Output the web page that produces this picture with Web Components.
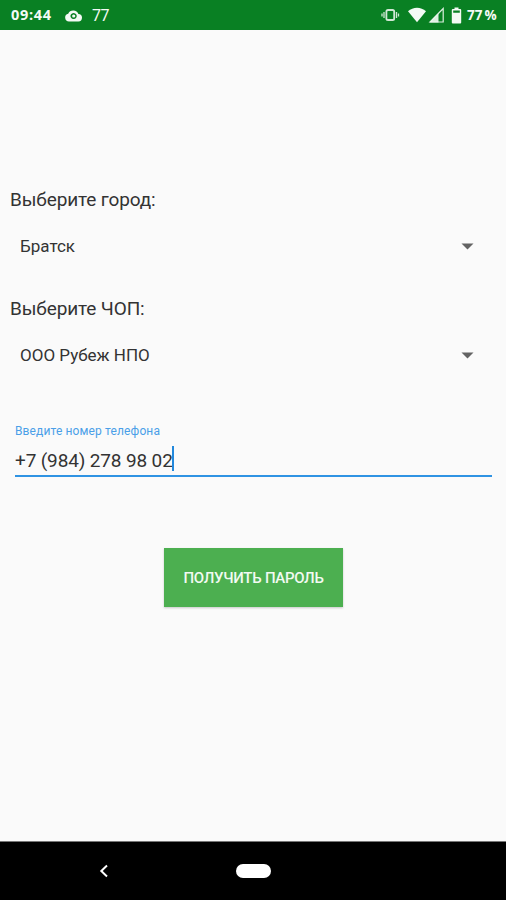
<!DOCTYPE html>
<html lang="ru">
<head>
<meta charset="utf-8">
<title>Получить пароль</title>
<style>
body { margin: 0; }
</style>
</head>
<body>
<app-screen>
  <status-bar slot="top" time="09:44" temp="77" battery="77 %"></status-bar>
  <spinner-field label="Выберите город:">Братск</spinner-field>
  <spinner-field label="Выберите ЧОП:">ООО Рубеж НПО</spinner-field>
  <phone-input label="Введите номер телефона">+7 (984) 278 98 02</phone-input>
  <action-button>ПОЛУЧИТЬ ПАРОЛЬ</action-button>
  <nav-bar slot="bottom"></nav-bar>
</app-screen>
<script>
class Base extends HTMLElement {
  connectedCallback() {
    if (this.shadowRoot) return;
    this.attachShadow({ mode: 'open' }).innerHTML = this.view();
  }
  attr(n) { return this.getAttribute(n) || ''; }
}

customElements.define('app-screen', class extends Base {
  view() { return `<style>
    :host { display: flex; flex-direction: column; width: 506px; height: 900px; background: #fafafa;
      font-family: Roboto, "Liberation Sans", sans-serif; color: #333; overflow: hidden; }
    main { flex: 1; display: flex; flex-direction: column; padding-top: 155px; }
  </style><slot name="top"></slot><main><slot></slot></main><slot name="bottom"></slot>`; }
});

customElements.define('status-bar', class extends Base {
  view() { return `<style>
    :host { display: flex; align-items: center; height: 30px; padding: 0 9px 0 11px; box-sizing: border-box;
      background: #098023; color: #f4faf5; font: 700 14px/30px "Open Sans", sans-serif; flex: none; }
    span { white-space: nowrap; }
    .time { width: 54px; font-size: 14.500px; letter-spacing: .7px; }
    .temp { font: 400 16px/30px Roboto, sans-serif; margin-left: 10px; flex: 1; letter-spacing: -.4px; padding-top: 1px; }
    .pct { width: 30px; word-spacing: -1.500px; font-size: 13.500px; letter-spacing: 0; }
    svg { display: block; fill: currentColor; flex: none; }
    .signals { margin-right: 7px; }
    .bat { margin-right: 5px; }
  </style>
  <span class="time">${this.attr('time')}</span>
  <svg width="17" height="14" viewBox="0 0 17 14"><path fill-rule="evenodd" d="M4 13.400A3.900 3.900 0 0 1 3.200 5.700 5.500 5.500 0 0 1 13.400 6 3.700 3.700 0 0 1 13.200 13.400ZM8.600 4.900a3.100 3.100 0 1 0 .01 0Z"/><circle cx="8.700" cy="8" r="1.600"/></svg>
  <span class="temp">${this.attr('temp')}</span>
  <svg class="signals" width="63" height="20" viewBox="381 5 63 20">
    <g fill="none" stroke="currentColor" opacity=".85"><rect x="386.400" y="10" width="7.800" height="10" rx="1.600" stroke-width="1.800"/><path d="M384 12v6M396.500 12v6M382 13.500v3M398.500 13.500v3" stroke-width="1.300"/></g>
    <path d="M408 11.200C413 6.500 421 6.500 426 11.200L417 22.200Z"/>
    <path d="M430 22 443.200 8.500V22Z" fill="none" stroke="currentColor" stroke-width="1.200" opacity=".9"/><path d="M429.500 22.500 438.500 13.200V22.500Z" opacity=".9"/>
  </svg>
  <svg class="bat" width="11" height="17" viewBox="0 0 11 17"><path fill-rule="evenodd" d="M1.800 2H3.500V.5h4V2H9.200Q10.200 2 10.200 3V15.500Q10.200 16.500 9.200 16.500H1.800Q.8 16.500.8 15.500V3Q.8 2 1.800 2ZM2.200 3.600V5.800H8.800V3.600Z"/></svg>
  <span class="pct">${this.attr('battery')}</span>`; }
});

customElements.define('spinner-field', class extends Base {
  view() { return `<style>
    :host { display: block; height: 109px; flex: none; }
    label { display: block; font-size: 19px; line-height: 30px; padding-left: 10px; letter-spacing: -.13px; white-space: nowrap; }
    .row { display: flex; justify-content: space-between; align-items: center; height: 30px; margin-top: 16px; padding: 0 32px 0 20px; font-size: 17px; }
    svg { fill: #636363; display: block; }
  </style><label>${this.attr('label')}</label>
  <div class="row"><span><slot></slot></span><svg width="13" height="7" viewBox="0 0 13 7"><path d="M.5.5h12L6.500 6.500Z"/></svg></div>`; }
});

customElements.define('phone-input', class extends Base {
  view() { return `<style>
    :host { display: block; margin: 20px 14px 0 15px; flex: none; }
    label { display: block; font-size: 12px; line-height: 16px; letter-spacing: .13px; color: #4a9fe8; white-space: nowrap; }
    .field { display: flex; align-items: center; height: 36px; padding-top: 7px; box-sizing: border-box; font-size: 19px; letter-spacing: -.14px; white-space: nowrap; }
    .line { height: 2px; background: #2f93e3; }
    i { width: 2px; height: 25px; background: #2288dc; margin: -4px 0 0 -.5px; }
  </style><label>${this.attr('label')}</label><div class="field"><span><slot></slot></span><i></i></div><div class="line"></div>`; }
});

customElements.define('action-button', class extends Base {
  view() { return `<style>
    :host { display: block; align-self: center; flex: none; margin-top: 71px; }
    button { display: block; width: 179px; height: 59px; margin: 0; padding: 2px 0 0 1px; border: 0; background: #4caf50; color: #f2faf2;
      font: 500 15px/57px Roboto, sans-serif; letter-spacing: -.27px; white-space: nowrap; box-shadow: 0 1px 2px #0003; }
  </style><button><slot></slot></button>`; }
});

customElements.define('nav-bar', class extends Base {
  view() { return `<style>
    :host { display: grid; grid-template-columns: 236px 35px 1fr; align-items: center; height: 59px; box-sizing: border-box;
      border-top: 1px solid #777; background: #000; flex: none; }
    svg { display: block; margin-left: 99px; }
    b { height: 14px; border-radius: 7px; background: #fff; }
  </style><svg width="10" height="14" viewBox="0 0 10 14"><path d="M8 1.500 2.300 7 8 12.500" fill="none" stroke="#fff" stroke-width="2"/></svg><b></b>`; }
});
</script>
</body>
</html>
